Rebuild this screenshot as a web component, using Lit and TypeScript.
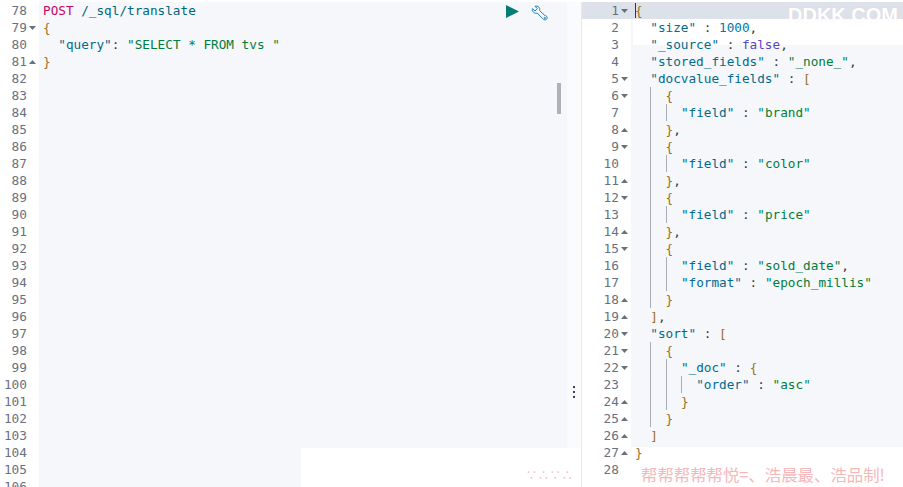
import { LitElement, html, css } from "lit";
import { customElement } from "lit/decorators.js";

type Fold = "" | "open" | "close";
const LEFT_START = 78;
const leftFold: Record<number, Fold> = { 79: "open", 81: "close" };
const rightFold: Record<number, Fold> = {
  1: "open", 5: "open", 6: "open", 8: "close", 9: "open", 11: "close", 12: "open", 14: "close",
  15: "open", 18: "close", 19: "close", 20: "open", 21: "open", 22: "open", 24: "close", 25: "close", 26: "close", 27: "close",
};

const k = (s: string) => html`<span class="key">${s}</span>`;
const o = (s: string) => html`<span class="brk">${s}</span>`;
const st = (s: string) => html`<span class="str">${s}</span>`;
const n = (s: string) => html`<span class="num">${s}</span>`;
const b = (s: string) => html`<span class="bool">${s}</span>`;
const g = (c: number) => Array.from({ length: c }, () => html`<span class="guide">  </span>`);

const rightLines = [
  html`${o("{")}`,
  html`  ${k('"size"')} : ${n("1000")},`,
  html`  ${k('"_source"')} : ${b("false")},`,
  html`  ${k('"stored_fields"')} : ${st('"_none_"')},`,
  html`  ${k('"docvalue_fields"')} : ${o("[")}`,
  html`  ${g(1)}${o("{")}`,
  html`  ${g(2)}${k('"field"')} : ${st('"brand"')}`,
  html`  ${g(1)}${o("}")},`,
  html`  ${g(1)}${o("{")}`,
  html`  ${g(2)}${k('"field"')} : ${st('"color"')}`,
  html`  ${g(1)}${o("}")},`,
  html`  ${g(1)}${o("{")}`,
  html`  ${g(2)}${k('"field"')} : ${st('"price"')}`,
  html`  ${g(1)}${o("}")},`,
  html`  ${g(1)}${o("{")}`,
  html`  ${g(2)}${k('"field"')} : ${st('"sold_date"')},`,
  html`  ${g(2)}${k('"format"')} : ${st('"epoch_millis"')}`,
  html`  ${g(1)}${o("}")}`,
  html`  ${o("]")},`,
  html`  ${k('"sort"')} : ${o("[")}`,
  html`  ${g(1)}${o("{")}`,
  html`  ${g(2)}${k('"_doc"')} : ${o("{")}`,
  html`  ${g(3)}${k('"order"')} : ${st('"asc"')}`,
  html`  ${g(2)}${o("}")}`,
  html`  ${g(1)}${o("}")}`,
  html`  ${o("]")}`,
  html`${o("}")}`,
  html``,
];

const leftLines = [
  html`<span class="method">POST</span> <span class="url">/_sql/translate</span>`,
  html`${o("{")}`,
  html`  ${k('"query"')}: ${st('"SELECT * FROM tvs "')}`,
  html`${o("}")}`,
];

@customElement("app-root")
export class AppRoot extends LitElement {
  static styles = css`
    :host {
      display: block;
      width: 903px;
      height: 487px;
      overflow: hidden;
      position: relative;
      background: #fff;
      font-family: "DejaVu Sans Mono", monospace;
      font-size: 12.7px;
      color: #343741;
    }
    .app { display: flex; height: 487px; padding-top: 2px; box-sizing: border-box; }
    .left { width: 567px; flex: none; background: #f5f7fa; }
    .spacer { width: 14px; flex: none; background: #fafbfd; border-right: 1px solid #e6e8ec; }
    .right { flex: 1; min-width: 0; background: #fff; }
    .row { display: flex; height: 17.03px; line-height: 17px; white-space: pre; }
    .gut {
      flex: none; background: #fff; color: #69707d; box-sizing: border-box;
      display: flex; align-items: center; justify-content: flex-end; font-size: 12.8px;
    }
    .left .gut { width: 39px; padding-right: 1px; }
    .right .gut { width: 49px; padding-right: 1px; }
    .fold { width: 11px; height: 8px; flex: none; display: flex; justify-content: center; align-items: center; }
    .fold svg { display: block; }
    .code { flex: 1; min-width: 0; padding-left: 4px; background: #f5f7fa; }
    .row.active .gut, .row.active .code { background: #dde2ea; }
    .row.band .code { background: linear-gradient(90deg, #f5f7fa 2px, #fff 2px); }
    .row.halfband .code {
      background: linear-gradient(#fff 9px, #f5f7fa 9px) 2px 0 no-repeat, #f5f7fa;
    }
    .row.end .code { background: linear-gradient(#f5f7fa 3px, #fff 3px); }
    .row.plain .code { background: #fff; }
    .guide { display: inline-block; position: relative; width: 15.3px; height: 17px; vertical-align: top; }
    .guide::before { content: ""; position: absolute; left: 0; top: 0; bottom: 0; width: 1px; background: #a9adb5; }
    .key { color: #006b8f; }
    .str { color: #017d3a; }
    .num { color: #0077a3; }
    .bool { color: #5a45c4; }
    .brk { color: #9a6f1e; }
    .method { color: #c4075f; }
    .url { color: #00667a; }
    .cursor { position: absolute; left: 635px; top: 3px; width: 1px; height: 15px; background: #343741; }
    .actions { position: absolute; left: 506px; top: 5px; display: flex; gap: 12px; align-items: flex-start; }
    .actions svg { display: block; }
    .thumb { position: absolute; left: 557px; top: 83px; width: 4px; height: 31px; background: #adb1b8; }
    .dots { position: absolute; left: 573px; top: 386px; display: flex; flex-direction: column; gap: 3px; }
    .dots i { display: block; width: 2px; height: 2px; background: #3a3f6e; }
    .wm-top {
      position: absolute; left: 788px; top: 5px; font: 700 20px/20px "Liberation Sans", sans-serif;
      color: #fff; letter-spacing: 0; white-space: pre;
      text-shadow: 0 0 1px rgba(240, 170, 185, 0.35);
    }
    .wm-box { position: absolute; left: 301px; top: 448px; width: 280px; height: 39px; background: #fff; }
    .wm-faint {
      position: absolute; left: 527px; top: 466px; color: #f6bfcb; white-space: pre;
      font: 400 14px/18px "DejaVu Sans", sans-serif; letter-spacing: 3px;
    }
    .wm-text {
      position: absolute; left: 641px; top: 463px; color: #f5b8ba; white-space: pre;
      font: 400 16.4px/22px "Noto Sans CJK SC", sans-serif; letter-spacing: 0;
    }
  `;

  private fold(f: Fold) {
    if (f === "open") return html`<svg width="7" height="4" viewBox="0 0 7 4"><path d="M0 0h7L3.5 4z" fill="#69707d"/></svg>`;
    if (f === "close") return html`<svg width="7" height="4" viewBox="0 0 7 4"><path d="M0 4h7L3.5 0z" fill="#69707d"/></svg>`;
    return "";
  }

  render() {
    const left = Array.from({ length: 29 }, (_, i) => {
      const num = LEFT_START + i;
      return html`<div class="row"><div class="gut"><span>${num}</span><span class="fold">${this.fold(leftFold[num] ?? "")}</span></div><div class="code">${leftLines[i] ?? ""}</div></div>`;
    });
    const right = rightLines.map((l, i) => {
      const num = i + 1;
      const cls = num === 1 ? "active" : num === 2 ? "band" : num === 3 ? "halfband" : num === 27 ? "end" : num === 28 ? "plain" : "";
      return html`<div class="row ${cls}"><div class="gut"><span>${num}</span><span class="fold">${this.fold(rightFold[num] ?? "")}</span></div><div class="code">${l}</div></div>`;
    });
    return html`
      <div class="app">
        <div class="left">${left}</div>
        <div class="spacer"></div>
        <div class="right">${right}</div>
      </div>
      <div class="cursor"></div>
      <div class="actions">
        <svg width="13" height="13" viewBox="0 0 13 13"><path d="M0 0 13 6.5 0 13z" fill="#017d73"/></svg>
        <svg width="17" height="17" viewBox="0 0 17 17" fill="none" stroke="#1a7fc0" stroke-width="1" stroke-linejoin="round">
          <path d="M4 1.3 6.3 3.6 4 6 1.4 3.7C.7 6.5 3.5 9 6.2 8l5.3 5.5c1.3 1.5 4 2 4.5 0 .5-2-1-3-2.5-3.3L8.5 5.5C9.5 3 7 .3 4 1.3z"/>
          <circle cx="13.8" cy="13" r="0.7" stroke-width="0.9"/>
        </svg>
      </div>
      <div class="thumb"></div>
      <div class="dots"><i></i><i></i><i></i></div>
      <div class="wm-top">DDKK.COM</div>
      <div class="wm-box"></div>
      <div class="wm-faint">∵∴∵∴</div>
      <div class="wm-text">帮帮帮帮帮悦=、浩晨最、浩品制!</div>
    `;
  }
}
